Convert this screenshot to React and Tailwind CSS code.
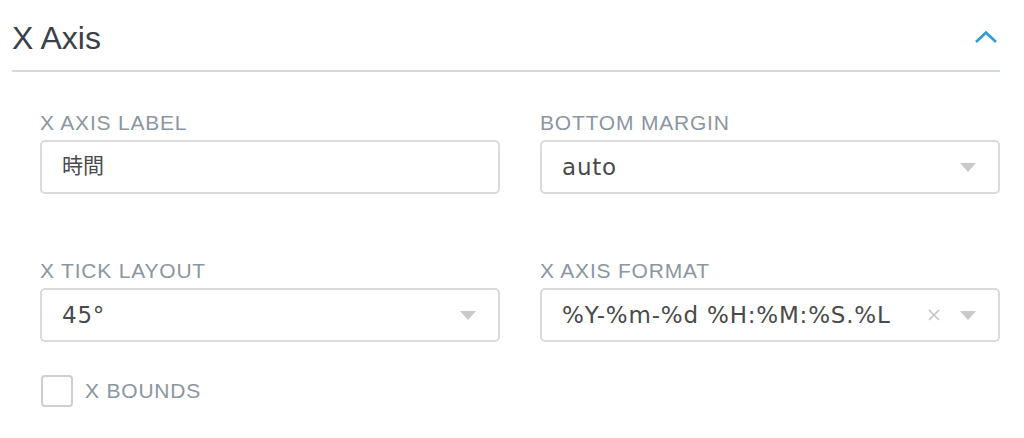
import React from "react";

const Caret = () => (
  <svg width="16" height="9" viewBox="0 0 16 9" className="shrink-0">
    <path d="M0 0 H16 L8 9 Z" fill="#c9c9c9" />
  </svg>
);

const Field = ({ label, children }) => (
  <div className="flex flex-col">
    <label className="text-[21px] leading-[24px] tracking-[0.8px] text-[#8b96a1] mb-[5px]">
      {label}
    </label>
    {children}
  </div>
);

const TextInput = ({ value, cjk }) => (
  <div className="h-[54px] border-2 border-[#dadada] rounded-[5px] bg-white flex items-center pl-[20px]">
    <span
      className={`${cjk ? "text-[21px]" : "text-[23px]"} text-[#4a4a4a]`}
      style={{ fontFamily: '"DejaVu Sans", "Noto Sans CJK JP", sans-serif' }}
    >
      {value}
    </span>
  </div>
);

const Select = ({ value, clearable }) => (
  <div className="h-[54px] border-2 border-[#dadada] rounded-[5px] bg-white flex items-center pl-[20px] pr-[22px]">
    <span
      className="flex-1 text-[23px] tracking-[0.8px] text-[#4a4a4a] whitespace-nowrap"
      style={{ fontFamily: '"DejaVu Sans", sans-serif' }}
    >
      {value}
    </span>
    {clearable && (
      <svg width="14" height="14" viewBox="0 0 14 14" className="mr-[19px] shrink-0">
        <path d="M2 2 L12 12 M12 2 L2 12" stroke="#c4c4c4" strokeWidth="1.6" />
      </svg>
    )}
    <Caret />
  </div>
);

export default function App() {
  return (
    <div
      className="w-[1024px] h-[438px] bg-white overflow-hidden pl-[12px] pr-[24px] pt-[18px]"
      style={{ fontFamily: '"Liberation Sans", Arial, sans-serif' }}
    >
      {/* header */}
      <div className="flex justify-between items-start h-[54px] border-b-2 border-[#d3dbe0]">
        <h2 className="text-[32px] leading-[40px] text-[#3c4148]">X Axis</h2>
        <svg width="24" height="14" viewBox="0 0 24 14" className="mt-[12px] mr-[2px]">
          <path d="M2 12 L12 2.5 L22 12" fill="none" stroke="#2f9bd0" strokeWidth="2.6" />
        </svg>
      </div>

      {/* fields */}
      <div className="pl-[28px] pt-[39px]">
        <div className="grid grid-cols-2 gap-x-[40px] gap-y-[65px]">
          <Field label="X AXIS LABEL">
            <TextInput value="時間" cjk />
          </Field>
          <Field label="BOTTOM MARGIN">
            <Select value="auto" />
          </Field>
          <Field label="X TICK LAYOUT">
            <Select value="45°" />
          </Field>
          <Field label="X AXIS FORMAT">
            <Select value="%Y-%m-%d %H:%M:%S.%L" clearable />
          </Field>
        </div>

        <div className="flex items-center gap-[12px] mt-[33px] ml-[1px]">
          <div className="w-[32px] h-[32px] border-2 border-[#cfcfcf] rounded-[4px] bg-white" />
          <span className="text-[21px] leading-[24px] tracking-[0.8px] text-[#8b96a1]">
            X BOUNDS
          </span>
        </div>
      </div>
    </div>
  );
}
